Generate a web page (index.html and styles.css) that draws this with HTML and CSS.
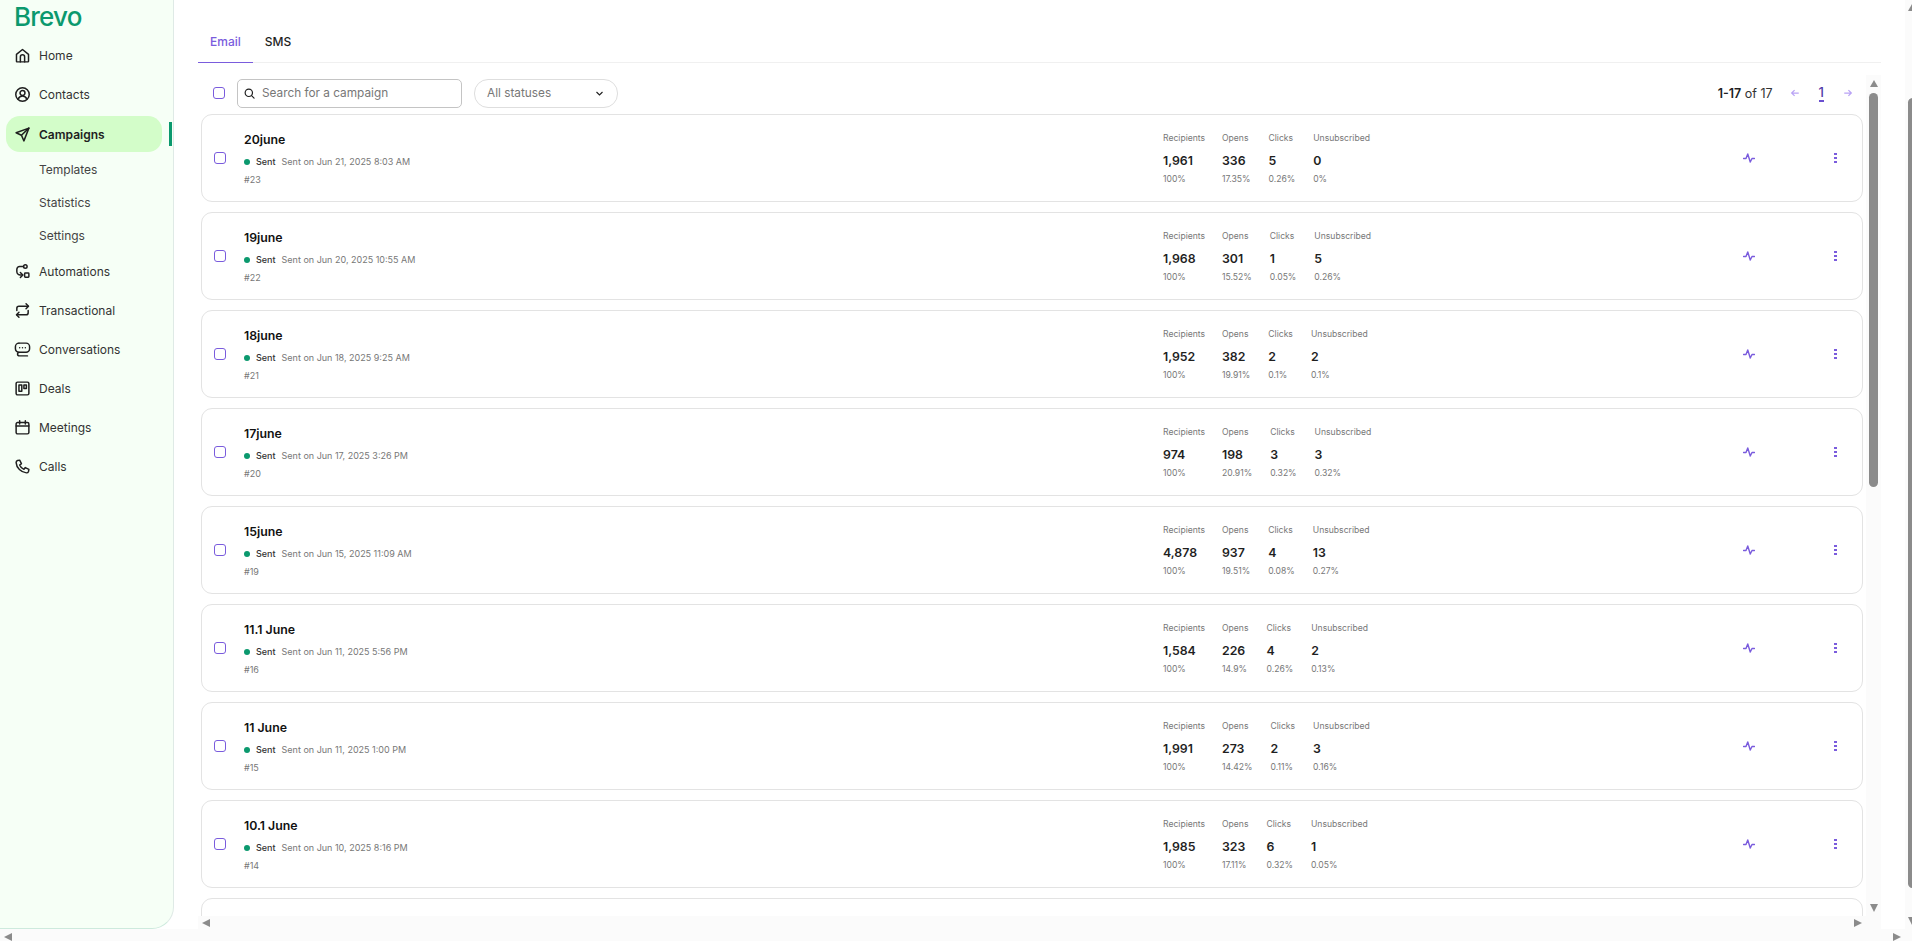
FILE: index.html
```html
<!DOCTYPE html>
<html lang="en">
<head>
<meta charset="utf-8">
<title>Brevo Campaigns</title>
<link rel="stylesheet" href="styles.css">
</head>
<body>
<div class="page">
  <div class="page-row">
    <aside class="sidebar">
      <div class="logo">Brevo</div>
      <nav class="nav">
        <a class="nav-item"><svg class="nav-icon" viewBox="0 0 24 24"><path d="M3.500 10.500 12 3.500l8.500 7V20a1 1 0 0 1-1 1h-15a1 1 0 0 1-1-1z"/><path d="M9 21v-7a3 3 0 0 1 6 0v7"/></svg>Home</a>
        <a class="nav-item"><svg class="nav-icon" viewBox="0 0 24 24"><circle cx="12" cy="12" r="9.500"/><circle cx="12" cy="10" r="3.500"/><path d="M5.800 18.500c1.200-3 3.500-4.500 6.200-4.500s5 1.500 6.200 4.500"/></svg>Contacts</a>
        <a class="nav-item active"><svg class="nav-icon" viewBox="0 0 24 24"><path d="M21 3 3 9.500l7.500 3.500L14 21z"/><path d="M21 3 10.500 13"/></svg>Campaigns</a>
        <a class="nav-sub">Templates</a>
        <a class="nav-sub">Statistics</a>
        <a class="nav-sub">Settings</a>
        <a class="nav-item"><svg class="nav-icon" viewBox="0 0 24 24"><circle cx="16" cy="5" r="2.500"/><rect x="15" y="14" width="6" height="6" rx="1"/><path d="M13.500 5H8a4 4 0 0 0-4 4v3a5 5 0 0 0 5 5h3"/><path d="m9 13.500 3.500 3.500L9 20.500"/></svg>Automations</a>
        <a class="nav-item"><svg class="nav-icon" viewBox="0 0 24 24"><path d="M4 12V9a3 3 0 0 1 3-3h13"/><path d="m17 2.500 3.500 3.500L17 9.500"/><path d="M20 12v3a3 3 0 0 1-3 3H4"/><path d="M7 14.500 3.500 18 7 21.500"/></svg>Transactional</a>
        <a class="nav-item"><svg class="nav-icon" viewBox="0 0 24 24"><path d="M7 3h10a5 5 0 0 1 5 5v3a5 5 0 0 1-5 5H8c-2 0-3 1-3 2.300S6 21 8 21h11"/><path d="M7 16a5 5 0 0 1-5-5V8a5 5 0 0 1 5-5"/><path d="M8 9.500h.01M12 9.500h.01M16 9.500h.01"/></svg>Conversations</a>
        <a class="nav-item"><svg class="nav-icon" viewBox="0 0 24 24"><rect x="3" y="3" width="18" height="18" rx="2"/><rect x="7" y="7" width="4" height="9"/><rect x="14" y="7" width="3.500" height="5"/></svg>Deals</a>
        <a class="nav-item"><svg class="nav-icon" viewBox="0 0 24 24"><rect x="3" y="5" width="18" height="16" rx="2"/><path d="M3 10h18M8 2.500V7M16 2.500V7"/></svg>Meetings</a>
        <a class="nav-item"><svg class="nav-icon" viewBox="0 0 24 24"><path d="M8 3 5 3.500C3.500 4 3 5 3 6.500 3.500 14 10 20.500 17.500 21c1.500 0 2.500-.5 3-2l.5-3-5-2.500-2 2.500c-3-1.200-5-3.200-6-6l2.500-2z"/></svg>Calls</a>
      </nav>
      <span class="active-bar"></span>
    </aside>
    <main class="main">
      <div class="main-inner">
        <div class="content">
          <div class="tabs">
            <a class="tab selected">Email</a>
            <a class="tab">SMS</a>
          </div>
          <div class="list-area">
            <div class="list-col">
              <div class="toolbar">
                <span class="check toolbar-check"></span>
                <div class="search">
                  <svg class="search-icon" viewBox="0 0 24 24"><circle cx="10.500" cy="10.500" r="8"/><path d="m16.500 16.500 5.500 5.500"/></svg>
                  <span>Search for a campaign</span>
                </div>
                <div class="select">
                  <span>All statuses</span>
                  <svg class="chev" viewBox="0 0 24 24"><path d="m4 8 8 8 8-8"/></svg>
                </div>
                <div class="pager">
                  <span class="pager-count"><b>1-17</b> of 17</span>
                  <svg class="pager-arrow" viewBox="0 0 24 24"><path d="M21 12H4M11 5l-7 7 7 7"/></svg>
                  <span class="pager-num">1</span>
                  <svg class="pager-arrow" viewBox="0 0 24 24"><path d="M3 12h17M13 5l7 7-7 7"/></svg>
                </div>
              </div>
              <div class="cards" id="cards"></div>
            </div>
            <div class="scroll-v inner-v">
              <span class="arr up"></span>
              <span class="thumb inner-thumb"></span>
              <span class="fill"></span>
              <span class="arr down"></span>
            </div>
          </div>
        </div>
        <div class="scroll-h inner-h">
          <span class="arr left"></span>
          <span class="fill"></span>
          <span class="arr right"></span>
        </div>
      </div>
    </main>
    <div class="scroll-v outer-v">
      <span class="arr up"></span>
      <span class="thumb outer-thumb"></span>
      <span class="fill"></span>
      <span class="arr down"></span>
    </div>
  </div>
  <div class="scroll-h outer-h">
    <span class="arr left"></span>
    <span class="fill"></span>
    <span class="arr right"></span>
  </div>
</div>
<script src="app.js"></script>
</body>
</html>
```

FILE: app.js
```js
var rows = [
  ["20june","Jun 21, 2025 8:03 AM","#23","1,961","336","17.35%","5","0.26%","0","0%"],
  ["19june","Jun 20, 2025 10:55 AM","#22","1,968","301","15.52%","1","0.05%","5","0.26%"],
  ["18june","Jun 18, 2025 9:25 AM","#21","1,952","382","19.91%","2","0.1%","2","0.1%"],
  ["17june","Jun 17, 2025 3:26 PM","#20","974","198","20.91%","3","0.32%","3","0.32%"],
  ["15june","Jun 15, 2025 11:09 AM","#19","4,878","937","19.51%","4","0.08%","13","0.27%"],
  ["11.1 June","Jun 11, 2025 5:56 PM","#16","1,584","226","14.9%","4","0.26%","2","0.13%"],
  ["11 June","Jun 11, 2025 1:00 PM","#15","1,991","273","14.42%","2","0.11%","3","0.16%"],
  ["10.1 June","Jun 10, 2025 8:16 PM","#14","1,985","323","17.11%","6","0.32%","1","0.05%"]
];
function stat(label, value, pct, extra) {
  return '<div class="stat ' + (extra || '') + '"><div class="stat-label">' + label + '</div><div class="stat-value">' + value + '</div><div class="stat-pct">' + pct + '</div></div>';
}
var html = rows.map(function (r) {
  return '<article class="card"><span class="check"></span>' +
    '<div class="card-info"><div class="card-title">' + r[0] + '</div>' +
    '<div class="card-status"><span class="dot"></span><span class="sent">Sent</span><span class="sent-on">Sent on ' + r[1] + '</span></div>' +
    '<div class="card-id">' + r[2] + '</div></div>' +
    '<div class="stats">' + stat('Recipients', r[3], '100%', 'first') + stat('Opens', r[4], r[5]) + stat('Clicks', r[6], r[7]) + stat('Unsubscribed', r[8], r[9]) + '</div>' +
    '<svg class="pulse" viewBox="0 0 24 24"><path d="M1 13h5l3.500-9 5 16 3.500-7h5"/></svg>' +
    '<svg class="dots" viewBox="0 0 3 10"><rect width="3" height="2"/><rect y="4" width="3" height="2"/><rect y="8" width="3" height="2"/></svg>' +
    '</article>';
}).join('');
html += '<article class="card"></article>';
document.getElementById('cards').innerHTML = html;
```

FILE: styles.css
```css
* { box-sizing: border-box; }
html, body { margin: 0; height: 100%; overflow: hidden; }
body { font-family: Inter, "Liberation Sans", sans-serif; color: #1f1f1f; background: #fff; }
.page { display: flex; flex-direction: column; height: 941px; width: 1912px; }
.page-row { display: flex; flex: 1; min-height: 0; }

.sidebar { position: relative; width: 174px; flex: none; background: #f6fff6; border-right: 1px solid #dfeae6; border-bottom: 1px solid #cdeadd; border-bottom-right-radius: 22px; }
.logo { height: 36px; padding: 0 0 0 14px; font-size: 26px; font-weight: 500; line-height: 33px; letter-spacing: -0.8px; color: #0b996e; overflow: hidden; }
.nav { display: flex; flex-direction: column; }
.nav-item { display: flex; align-items: center; height: 39px; gap: 8px; padding-left: 14px; font-size: 12px; color: #333; }
.nav-icon { width: 17px; height: 17px; flex: none; fill: none; stroke: #1f1f1f; stroke-width: 2.100; stroke-linecap: round; stroke-linejoin: round; }
.nav-item.active { height: 36px; margin: 2px 11px 1px 6px; padding-left: 8px; background: #d3fdc9; border-radius: 14px; font-weight: 600; color: #1f1f1f; }
.nav-sub { display: flex; align-items: center; height: 33px; padding-left: 39px; font-size: 12px; color: #444; }
.active-bar { position: absolute; left: 169px; top: 122px; width: 3px; height: 24px; background: #0b996e; }

.main { flex: 1; min-width: 0; display: flex; padding-left: 24px; }
.main-inner { flex: 1; min-width: 0; display: flex; flex-direction: column; }
.content { flex: 1; min-height: 0; overflow: hidden; display: flex; flex-direction: column; }
.tabs { display: flex; height: 63px; flex: none; border-bottom: 1px solid #f0f0f0; padding-top: 22px; }
.tab { width: 55px; height: 41px; line-height: 39px; text-align: center; font-size: 12px; font-weight: 500; color: #1f1f1f; }
.tab + .tab { width: 40px; margin-left: 5px; }
.tab.selected { color: #7a5cdd; border-bottom: 1px solid #7a5cdd; }

.list-area { flex: 1; min-height: 0; display: flex; padding-top: 16px; }
.list-col { flex: 1; min-width: 0; display: flex; flex-direction: column; }
.toolbar { display: flex; align-items: center; height: 28px; flex: none; padding-left: 15px; }
.check { display: block; width: 12px; height: 12px; flex: none; border: 1.300px solid #7a5cdd; border-radius: 3px; background: #fff; }
.search { display: flex; align-items: center; gap: 7px; width: 225px; height: 29px; margin-left: 12px; padding-left: 6px; border: 1px solid #c4c4c4; border-radius: 5px; font-size: 11.800px; color: #777; }
.search-icon { width: 11px; height: 11px; fill: none; stroke: #1f1f1f; stroke-width: 2.600; stroke-linecap: round; }
.select { display: flex; align-items: center; justify-content: space-between; width: 144px; height: 29px; margin-left: 12px; padding: 0 13px 0 12px; border: 1px solid #dedede; border-radius: 14px; font-size: 11.800px; color: #777; }
.chev { width: 9px; height: 9px; fill: none; stroke: #1f1f1f; stroke-width: 3; }
.pager { display: flex; align-items: center; margin-left: auto; padding-right: 13px; font-size: 12.500px; color: #333; }
.pager-count { margin-right: 17px; }
.pager-count b { font-weight: 600; color: #1f1f1f; }
.pager-arrow { width: 10px; height: 10px; fill: none; stroke: #b9a3f5; stroke-width: 3; }
.pager-num { margin: 0 19px; color: #4f3aa8; font-size: 13px; font-weight: 500; border-bottom: 2px solid #6a4fd0; line-height: 15px; }

.cards { flex: 1; min-height: 0; overflow: hidden; padding: 7px 3px 0; display: flex; flex-direction: column; gap: 10px; }
.card { flex: none; display: flex; align-items: center; height: 88px; border: 1px solid #e3e3e3; border-radius: 11px; background: #fff; padding-left: 12px; }
.card-info { width: 919px; margin-left: 18px; padding-top: 2px; flex: none; }
.card-title { font-size: 12.300px; font-weight: 600; color: #111; line-height: 16px; margin-bottom: 8px; }
.card-status { display: flex; align-items: center; font-size: 9px; line-height: 12px; color: #777; margin-bottom: 6px; }
.dot { width: 6px; height: 6px; border-radius: 50%; background: #0b996e; margin-right: 6px; }
.sent { color: #333; font-weight: 500; margin-right: 6px; }
.card-id { font-size: 9px; line-height: 12px; color: #777; }
.stats { display: flex; width: 580px; flex: none; }
.stat { margin-right: 18px; font-size: 8.600px; color: #777; }
.stat.first { min-width: 45px; margin-right: 14px; }
.stat-label { line-height: 12px; margin-bottom: 9px; }
.stat-value { font-size: 12.300px; font-weight: 600; line-height: 16px; color: #1f1f1f; margin-bottom: 4px; }
.stat-pct { line-height: 12px; }
.pulse { width: 12px; height: 12px; flex: none; fill: none; stroke: #7a5cdd; stroke-width: 2.800; stroke-linejoin: round; stroke-linecap: round; }
.dots { width: 3px; height: 10px; flex: none; margin-left: 79px; fill: #7a5cdd; }

.scroll-v { display: flex; flex-direction: column; flex: none; background: #fbfbfb; }
.scroll-h { display: flex; flex: none; background: #fbfbfb; }
.fill { flex: 1; }
.thumb { display: block; flex: none; background: #8b8b8b; border-radius: 5px; }
.inner-v { width: 15px; margin-top: -4px; align-items: center; padding: 5px 0 4px; }
.inner-thumb { width: 9px; height: 394px; margin-top: 6px; }
.inner-h { height: 13px; align-items: center; padding: 0 19px 0 4px; }
.outer-v { width: 7px; margin-left: 24px; padding: 4px 0 4px 3px; align-items: flex-start; overflow: hidden; }
.outer-thumb { width: 9px; height: 790px; margin-top: 87px; }
.outer-h { height: 12px; align-items: flex-end; padding: 0 11px 0 4px; }
.arr { display: block; width: 0; height: 0; flex: none; }
.arr.up { border: 4.500px solid transparent; border-top: 0; border-bottom: 7px solid #8b8b8b; }
.arr.down { border: 4.500px solid transparent; border-bottom: 0; border-top: 8px solid #8b8b8b; }
.arr.left { border: 4.500px solid transparent; border-left: 0; border-right: 8px solid #8b8b8b; }
.arr.right { border: 4.500px solid transparent; border-right: 0; border-left: 8px solid #8b8b8b; }
```
